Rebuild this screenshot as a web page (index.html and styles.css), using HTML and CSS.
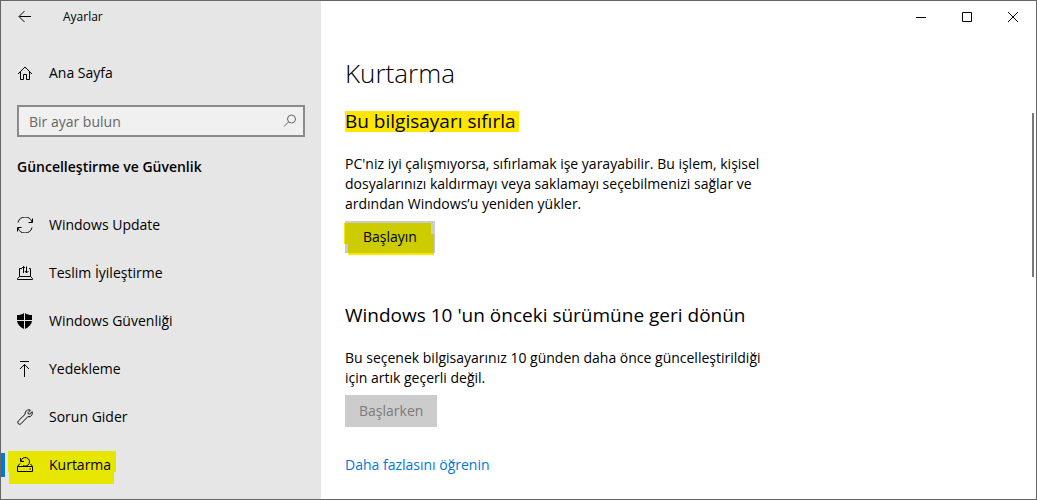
FILE: index.html
```html
<!DOCTYPE html>
<html lang="tr">
<head>
    <meta charset="UTF-8">
    <meta name="viewport" content="width=device-width, initial-scale=1.0">
    <title>Ayarlar</title>
    <link rel="stylesheet" href="styles.css">
</head>
<body>
    <div class="window">
        <!-- Sidebar -->
        <aside class="sidebar">
            <header class="app-bar">
                <button type="button" class="back" aria-label="Geri">
                    <svg class="icon" viewBox="0 0 16 16"><path d="M14 7.500H2.500M7.500 2L2 7.500l5.500 5.500"/></svg>
                </button>
                <span class="app-name">Ayarlar</span>
            </header>

            <a href="#" class="nav-link home">
                <svg class="icon" viewBox="0 0 16 16"><path d="M1 9L8 2l7 7M3.500 7v7.500h3v-5h3v5h3V7"/></svg>
                Ana Sayfa
            </a>

            <form class="search">
                <input type="text" placeholder="Bir ayar bulun" aria-label="Bir ayar bulun">
                <svg class="icon" viewBox="0 0 16 16"><circle cx="9.500" cy="6" r="4"/><path d="M6.500 9L2 13.500"/></svg>
            </form>

            <h2 class="group-title">Güncelleştirme ve Güvenlik</h2>

            <nav>
                <a href="#" class="nav-link">
                    <svg class="icon" viewBox="0 0 16 16"><path d="M1 5.500A7.300 7.300 0 0 1 15 5M15.500 1.500v4h-4M15 10.500A7.300 7.300 0 0 1 1 11M.5 14.500v-4h4"/></svg>
                    Windows Update
                </a>
                <a href="#" class="nav-link">
                    <svg class="icon" viewBox="0 0 16 16"><path d="M5 3.500H2.500v8h11v-8H12M2.500 11.500l-2 2v1h15v-1l-2-2M6.500 8V1.500M4.500 3.500l2-2 1.500 1.500M9.500 1.500V8M8 6l1.500 2 2-2"/></svg>
                    Teslim İyileştirme
                </a>
                <a href="#" class="nav-link">
                    <svg class="icon solid" viewBox="0 0 16 16"><path d="M7 0v7H0V2C3 2 5 1.500 7 0zM8 0c2 1.500 4 2 7 2v5H8zM0 8h7v8C3 14 .5 11.500 0 8zM8 8h7c-.5 3.500-3 6-7 8z"/></svg>
                    Windows Güvenliği
                </a>
                <a href="#" class="nav-link">
                    <svg class="icon" viewBox="0 0 16 16"><path d="M3 .5h9M7.500 16V3.500M3 8l4.500-4.500L12 8"/></svg>
                    Yedekleme
                </a>
                <a href="#" class="nav-link">
                    <svg class="icon" viewBox="0 0 16 16"><path d="M13.500 1.200L11 3.700l.3 1.200 1.300.3 2.500-2.500c.8 2.800-1 5.500-4.300 5L4 14.700C2.200 16.400-.3 14 1.300 12L8.200 5.200C7.700 2.200 10.500 0 13.500 1.200z"/></svg>
                    Sorun Gider
                </a>
                <a href="#" class="nav-link active" aria-current="page">
                    <svg class="icon" viewBox="0 0 16 16"><path d="M.5 9.500h15v5H.5zM.5 9.500l2.500-3M15.500 9.500l-2-2.500M12.500 12h1.500M3.500 1v3.500H7M4 4A4.300 4.300 0 1 1 6 8.500"/></svg>
                    Kurtarma
                </a>
            </nav>
        </aside>

        <!-- Content -->
        <div class="content">
            <div class="window-controls">
                <button type="button" aria-label="Simge durumuna küçült"><svg viewBox="0 0 10 10"><path d="M0 5.500h10"/></svg></button>
                <button type="button" aria-label="Ekranı kapla"><svg viewBox="0 0 10 10"><path d="M.5.5h9v9h-9z"/></svg></button>
                <button type="button" aria-label="Kapat"><svg viewBox="0 0 10 10"><path d="M0 0l10 10M10 0L0 10"/></svg></button>
            </div>

            <main>
                <h1>Kurtarma</h1>

                <section>
                    <h2><mark>Bu bilgisayarı sıfırla</mark></h2>
                    <p>PC'niz iyi çalışmıyorsa, sıfırlamak işe yarayabilir. Bu işlem, kişisel dosyalarınızı kaldırmayı veya saklamayı seçebilmenizi sağlar ve ardından Windows’u yeniden yükler.</p>
                    <button type="button" class="btn marked">Başlayın</button>
                </section>

                <section>
                    <h2>Windows 10 'un önceki sürümüne geri dönün</h2>
                    <p>Bu seçenek bilgisayarınız 10 günden daha önce güncelleştirildiği için artık geçerli değil.</p>
                    <button type="button" class="btn" disabled>Başlarken</button>
                </section>

                <a href="#" class="more">Daha fazlasını öğrenin</a>
            </main>
            <div class="scroll-thumb"></div>
        </div>
    </div>
</body>
</html>
```
FILE: styles.css
```css
* {
    box-sizing: border-box;
}
body {
    margin: 0;
    font-family: "Open Sans", "Noto Sans", sans-serif;
    font-size: 14px;
    line-height: 20px;
    color: #000;
}
h1, h2, p {
    margin: 0;
}
a {
    text-decoration: none;
}
button, input {
    font: inherit;
}
svg {
    fill: none;
    stroke: #000;
}
.window {
    display: grid;
    grid-template-columns: 320px 1fr;
    height: 100vh;
    overflow: hidden;
    border: 1px solid #666;
}

/* Sidebar */
.sidebar {
    background-color: #e6e6e6;
}
.app-bar {
    display: flex;
    align-items: center;
    height: 32px;
    font-size: 12px;
}
.back {
    display: flex;
    align-items: center;
    justify-content: center;
    width: 48px;
    height: 32px;
    margin-right: 14px;
    padding: 0;
    border: none;
    background: none;
}
.icon {
    flex: none;
    width: 16px;
    height: 16px;
}
.solid {
    fill: #000;
    stroke: none;
}
.nav-link {
    position: relative;
    display: flex;
    align-items: center;
    gap: 16px;
    height: 48px;
    padding-left: 16px;
    color: #000;
}
.home {
    margin-top: 16px;
}
.search {
    position: relative;
    margin: 8px 16px 0;
}
.search input {
    display: block;
    width: 100%;
    height: 32px;
    padding: 0 32px 0 10px;
    border: 2px solid #8a8a8a;
    background-color: #f0f0f0;
}
.search input::placeholder {
    color: #666;
    opacity: 1;
}
.search .icon {
    position: absolute;
    top: 8px;
    right: 7px;
    stroke: #666;
}
.group-title {
    margin: 20px 16px 24px;
    font-size: 14px;
    font-weight: 600;
}
.active {
    z-index: 0;
}
.active::before {
    content: "";
    position: absolute;
    left: 0;
    top: 12px;
    width: 4px;
    height: 24px;
    background-color: #0078d7;
}
/* Marker stroke behind the current item */
.active::after {
    content: "";
    position: absolute;
    z-index: -1;
    left: 7px;
    top: 10px;
    width: 108px;
    height: 33px;
    background-color: #e6e600;
    clip-path: polygon(0 0, 100% 0, 100% 21px, 106px 21px, 106px 100%, 1px 100%, 1px 21px, 0 21px);
}

/* Content */
.content {
    position: relative;
    background-color: #fff;
}
.window-controls {
    display: flex;
    justify-content: flex-end;
}
.window-controls button {
    display: flex;
    align-items: center;
    justify-content: center;
    width: 46px;
    height: 32px;
    padding: 0;
    border: none;
    background: none;
}
.window-controls svg {
    width: 10px;
    height: 10px;
}
main {
    max-width: 480px;
    padding: 24px 24px 0;
}
h1 {
    margin-bottom: 20px;
    font-size: 26px;
    font-weight: 300;
    line-height: 32px;
}
section {
    margin-bottom: 28px;
}
section + section {
    margin-top: 50px;
}
section h2 {
    margin-bottom: 21px;
    font-size: 19px;
    font-weight: 400;
    line-height: 24px;
}
mark {
    display: block;
    width: fit-content;
    padding-right: 3px;
    background: linear-gradient(#ffe600, #ffe600) 0 2px / 100% 21px no-repeat;
    color: #000;
}
section p {
    margin-bottom: 7px;
}
.btn {
    position: relative;
    display: block;
    height: 32px;
    padding: 0 14px;
    border: none;
    background-color: #ccc;
    color: #000;
}
.btn:disabled {
    color: #7a7a7a;
}
.marked {
    z-index: 0;
    padding: 0 18px;
}
/* Marker stroke, brighter where it runs past the button */
.marked::after {
    content: "";
    position: absolute;
    z-index: -1;
    inset: 2px 1px -2px -1px;
    border: solid #ffe600;
    border-width: 0 0 2px 1px;
    background-color: #cc0;
    clip-path: polygon(0 0, 87px 0, 87px 11px, 100% 11px, 100% 100%, 4px 100%, 4px 21px, 0 21px);
}
.more {
    color: #0078d7;
}
.scroll-thumb {
    position: absolute;
    top: 112px;
    right: 2px;
    width: 2px;
    height: 164px;
    background-color: #7a7a7a;
}
```
